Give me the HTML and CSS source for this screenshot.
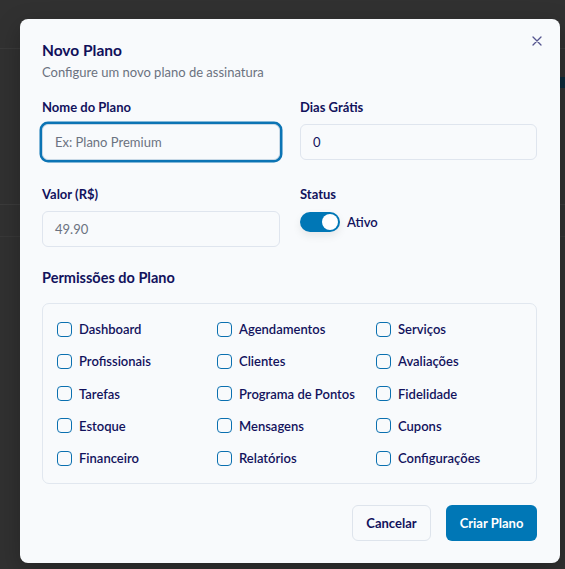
FILE: index.html
```html
<!DOCTYPE html>
<html lang="pt-BR">
<head>
<meta charset="utf-8">
<title>Novo Plano</title>
<link rel="stylesheet" href="styles.css">
</head>
<body>
<div class="backdrop">
  <div class="modal">
    <button class="close" aria-label="Fechar">
      <svg width="10" height="10" viewBox="0 0 10 10"><path d="M1 1L9 9M9 1L1 9" stroke="#55558f" stroke-width="1.3" stroke-linecap="round" fill="none"/></svg>
    </button>
    <h1 class="title">Novo Plano</h1>
    <p class="subtitle">Configure um novo plano de assinatura</p>

    <div class="grid">
      <div class="field">
        <label class="label">Nome do Plano</label>
        <div class="input focus"><span class="ph">Ex: Plano Premium</span></div>
      </div>
      <div class="field">
        <label class="label">Dias Grátis</label>
        <div class="input"><span class="val">0</span></div>
      </div>
      <div class="field">
        <label class="label">Valor (R$)</label>
        <div class="input"><span class="ph">49.90</span></div>
      </div>
      <div class="field">
        <label class="label">Status</label>
        <div class="status">
          <span class="toggle"><span class="knob"></span></span>
          <span class="status-text">Ativo</span>
        </div>
      </div>
    </div>

    <h2 class="section">Permissões do Plano</h2>
    <div class="perms">
      <div class="perm"><span class="cb"></span>Dashboard</div>
      <div class="perm"><span class="cb"></span>Agendamentos</div>
      <div class="perm"><span class="cb"></span>Serviços</div>
      <div class="perm"><span class="cb"></span>Profissionais</div>
      <div class="perm"><span class="cb"></span>Clientes</div>
      <div class="perm"><span class="cb"></span>Avaliações</div>
      <div class="perm"><span class="cb"></span>Tarefas</div>
      <div class="perm"><span class="cb"></span>Programa de Pontos</div>
      <div class="perm"><span class="cb"></span>Fidelidade</div>
      <div class="perm"><span class="cb"></span>Estoque</div>
      <div class="perm"><span class="cb"></span>Mensagens</div>
      <div class="perm"><span class="cb"></span>Cupons</div>
      <div class="perm"><span class="cb"></span>Financeiro</div>
      <div class="perm"><span class="cb"></span>Relatórios</div>
      <div class="perm"><span class="cb"></span>Configurações</div>
    </div>

    <div class="actions">
      <button class="btn btn-outline">Cancelar</button>
      <button class="btn btn-primary">Criar Plano</button>
    </div>
  </div>
</div>
</body>
</html>
```

FILE: styles.css
```css
* { box-sizing: border-box; }
html, body { margin: 0; padding: 0; }
body {
  width: 565px;
  height: 569px;
  overflow: hidden;
  font-family: Lato, "Noto Sans", sans-serif;
  background: #313131;
}
.backdrop {
  width: 565px;
  height: 569px;
  padding: 19px 0 0 20px;
  background:
    linear-gradient(#3a3a3a, #3a3a3a) 0 48px / 100% 1px no-repeat,
    linear-gradient(#3b3b3b, #3b3b3b) 0 204px / 100% 1px no-repeat,
    linear-gradient(#383838, #383838) 0 236px / 100% 1px no-repeat,
    linear-gradient(#0c2a3a, #0c2a3a) 560px 77px / 5px 11px no-repeat,
    #313131;
}
.modal {
  position: relative;
  width: 540px;
  height: 544px;
  background: #f8fafc;
  border-radius: 8px;
  padding: 21px 23px 0 22px;
  box-shadow: 0 8px 24px rgba(0,0,0,0.25);
}
.close {
  position: absolute;
  top: 16px;
  right: 17px;
  width: 12px;
  height: 12px;
  padding: 0;
  border: 0;
  background: none;
  display: flex;
  align-items: center;
  justify-content: center;
}
.title {
  margin: 0;
  font-size: 15.5px;
  line-height: 20px;
  font-weight: 700;
  color: #10105a;
}
.subtitle {
  margin: 3px 0 0;
  font-size: 13px;
  line-height: 18px;
  color: #6b7280;
}
.grid {
  margin-top: 17px;
  display: grid;
  grid-template-columns: 238px 237px;
  column-gap: 20px;
  row-gap: 25px;
}
.field { display: flex; flex-direction: column; }
.label {
  font-size: 13px;
  line-height: 18px;
  font-weight: 700;
  color: #12125c;
}
.input {
  margin-top: 8px;
  height: 36px;
  border: 1px solid #dfe5ee;
  border-radius: 6px;
  background: #f8fafc;
  display: flex;
  align-items: center;
  padding: 0 12px;
  font-size: 13px;
}
.input.focus {
  border-color: #c9d9e6;
  box-shadow: 0 0 0 2.5px #0c74b4;
}
.ph { color: #6b7280; }
.val { color: #12125c; }
.status {
  margin-top: 9px;
  display: flex;
  align-items: center;
  gap: 7px;
}
.toggle {
  width: 40px;
  height: 20px;
  border-radius: 10px;
  background: #0077b6;
  position: relative;
  box-shadow: 0 4px 8px rgba(0,0,0,0.08);
  display: flex;
  justify-content: flex-end;
  align-items: center;
  padding-right: 2px;
}
.knob {
  width: 16px;
  height: 16px;
  border-radius: 50%;
  background: #fff;
}
.status-text {
  font-size: 13px;
  font-weight: 600;
  color: #12125c;
}
.section {
  margin: 21px 0 0;
  font-size: 14.5px;
  line-height: 20px;
  font-weight: 700;
  color: #12125c;
}
.perms {
  margin-top: 15px;
  border: 1px solid #e1e7ef;
  border-radius: 7px;
  padding: 15px 14px;
  display: grid;
  grid-template-columns: 160px 159px 1fr;
  grid-auto-rows: 20px;
  row-gap: 12.3px;
}
.perm {
  display: flex;
  align-items: center;
  gap: 7px;
  font-size: 13px;
  font-weight: 600;
  color: #12125c;
  white-space: nowrap;
}
.cb {
  width: 15px;
  height: 15px;
  border: 1.5px solid #0a70b0;
  border-radius: 4px;
  background: #f8fafc;
  flex: none;
}
.actions {
  margin-top: 21px;
  display: flex;
  justify-content: flex-end;
  gap: 15px;
}
.btn {
  height: 36px;
  border-radius: 6px;
  font-family: inherit;
  font-size: 13px;
  font-weight: 700;
  padding: 0;
  white-space: nowrap;
  cursor: pointer;
}
.btn-outline {
  width: 79px;
  background: #f8fafc;
  border: 1px solid #dee4ec;
  color: #12125c;
}
.btn-primary {
  width: 91px;
  background: #0077b6;
  border: 0;
  color: #ffffff;
}
```
